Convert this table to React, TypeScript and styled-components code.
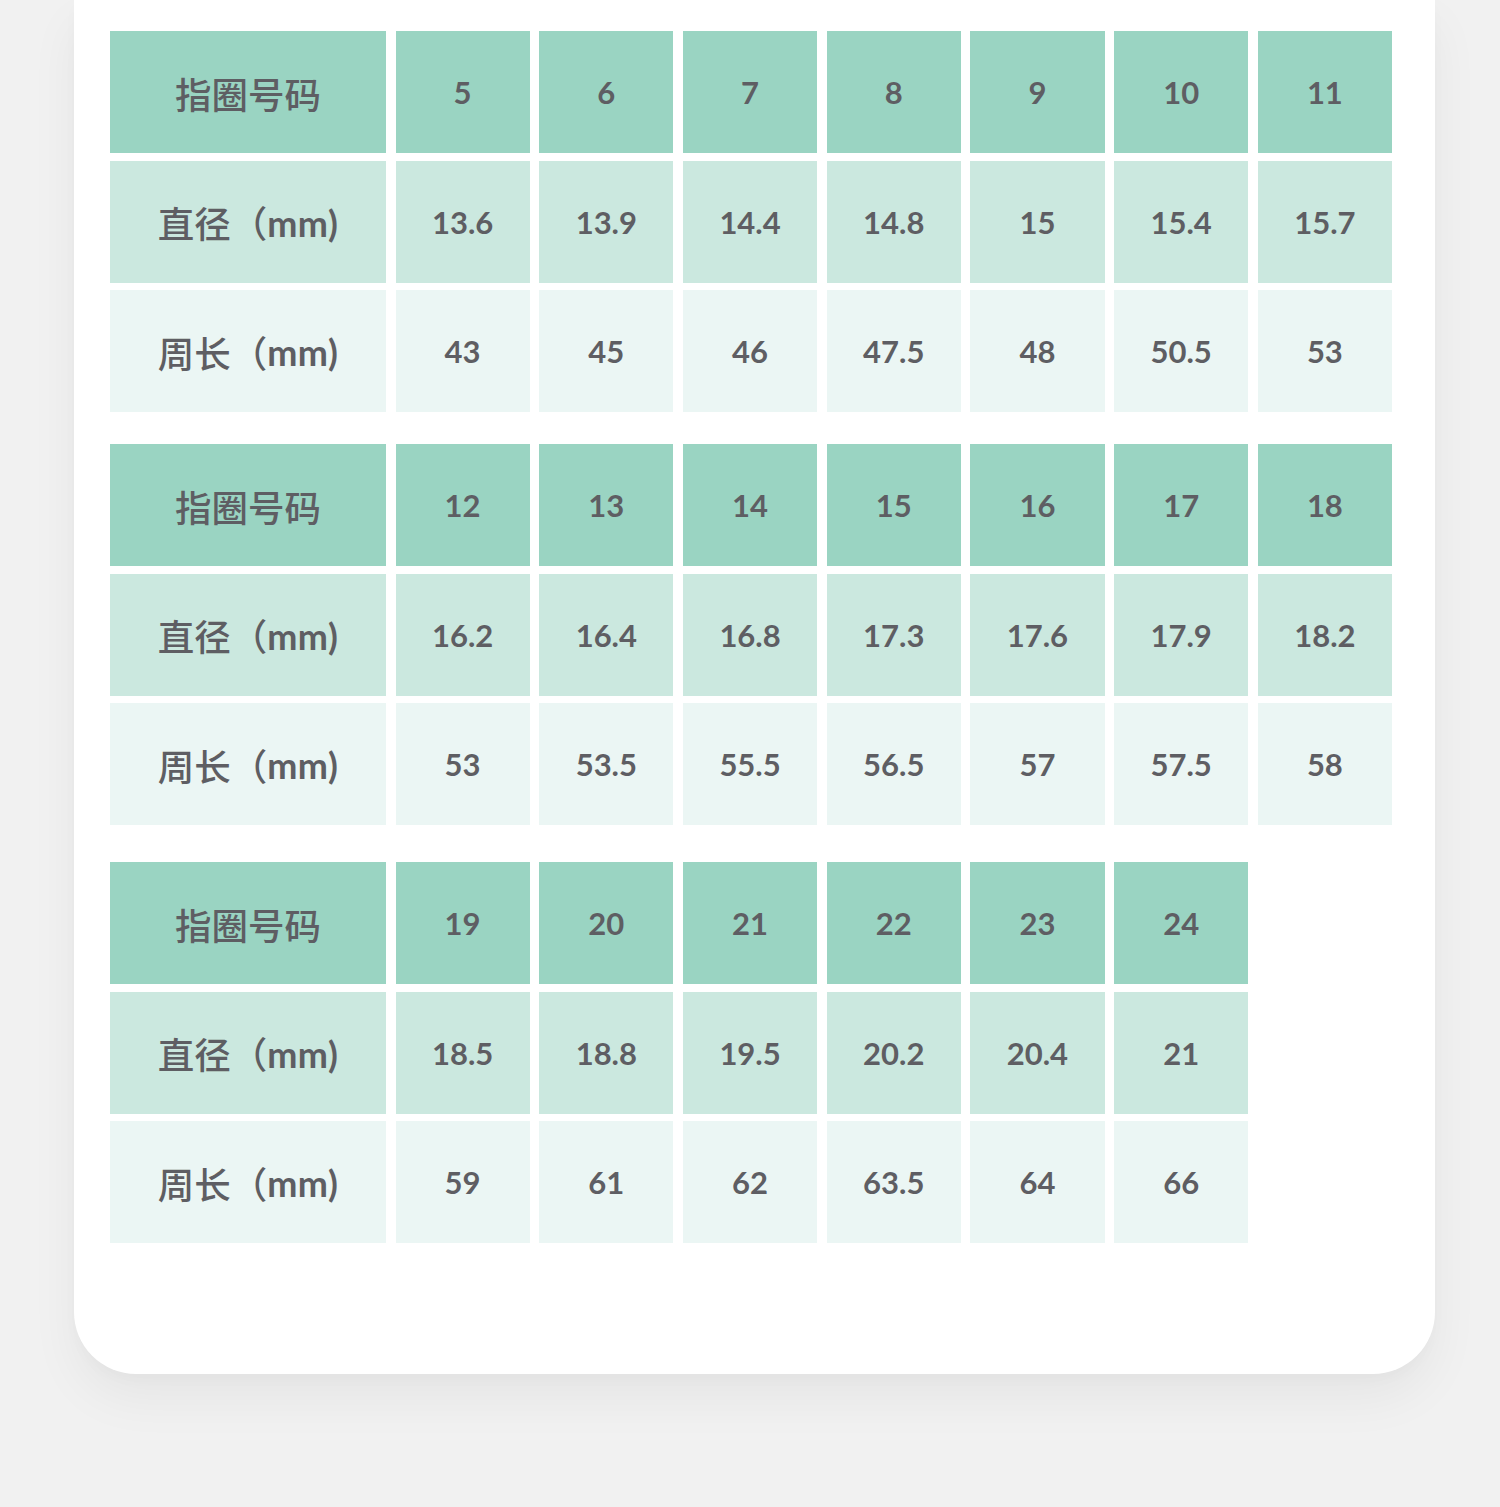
import React from "react";
import styled, { createGlobalStyle } from "styled-components";

const GlobalStyle = createGlobalStyle`
  html, body {
    margin: 0;
    padding: 0;
    background: #f1f1f1;
  }
  #root {
    min-height: 1507px;
  }
`;

const Page = styled.div`
  min-height: 1507px;
  box-sizing: border-box;
  background: #f1f1f1;
  padding: 0 65px 0 74px;
  font-family: "Lato", "Noto Sans CJK SC", sans-serif;
`;

const Card = styled.div`
  background: #ffffff;
  border-radius: 0 0 62px 62px;
  box-shadow: 0 24px 50px rgba(0, 0, 0, 0.05), 0 6px 14px rgba(0, 0, 0, 0.02);
  padding: 31px 43px 131px 36px;
  display: flex;
  flex-direction: column;
`;

const Table = styled.div<{ $spaceBefore?: number }>`
  display: flex;
  flex-direction: column;
  gap: 7.5px;
  margin-top: ${(p) => p.$spaceBefore ?? 0}px;
`;

const Row = styled.div`
  display: grid;
  grid-template-columns: 276px repeat(7, 1fr);
  column-gap: 9.5px;
  height: 122px;
`;

type Tone = "head" | "mid" | "light";

const tones: Record<Tone, string> = {
  head: "#9ad4c2",
  mid: "#cbe8df",
  light: "#ebf6f4",
};

const Cell = styled.div<{ $tone: Tone }>`
  background: ${(p) => tones[p.$tone]};
  display: flex;
  align-items: center;
  justify-content: center;
  color: #5e5e63;
  font-size: 31px;
  font-weight: 700;
`;

const LabelCell = styled(Cell)`
  font-family: "Noto Sans CJK SC", sans-serif;
  font-size: 36.5px;
  font-weight: 500;
  padding-top: 2px;
`;

const Paren = styled.span`
  font-family: "Lato", "Noto Sans CJK SC", sans-serif;
  font-weight: 700;
  font-size: 36px;
  letter-spacing: 0.5px;
`;

type Block = { sizes: string[]; dia: string[]; circ: string[]; space: number };

const blocks: Block[] = [
  {
    sizes: ["5", "6", "7", "8", "9", "10", "11"],
    dia: ["13.6", "13.9", "14.4", "14.8", "15", "15.4", "15.7"],
    circ: ["43", "45", "46", "47.5", "48", "50.5", "53"],
    space: 0,
  },
  {
    sizes: ["12", "13", "14", "15", "16", "17", "18"],
    dia: ["16.2", "16.4", "16.8", "17.3", "17.6", "17.9", "18.2"],
    circ: ["53", "53.5", "55.5", "56.5", "57", "57.5", "58"],
    space: 32,
  },
  {
    sizes: ["19", "20", "21", "22", "23", "24"],
    dia: ["18.5", "18.8", "19.5", "20.2", "20.4", "21"],
    circ: ["59", "61", "62", "63.5", "64", "66"],
    space: 37,
  },
];

const DataRow = ({
  tone,
  label,
  values,
}: {
  tone: Tone;
  label: React.ReactNode;
  values: string[];
}) => (
  <Row>
    <LabelCell $tone={tone}>{label}</LabelCell>
    {values.map((v, i) => (
      <Cell key={i} $tone={tone}>
        {v}
      </Cell>
    ))}
  </Row>
);

export default function App() {
  return (
    <>
      <GlobalStyle />
      <Page>
        <Card>
          {blocks.map((b, i) => (
            <Table key={i} $spaceBefore={b.space}>
              <DataRow tone="head" label="指圈号码" values={b.sizes} />
              <DataRow
                tone="mid"
                label={
                  <>
                    直径（<Paren>mm)</Paren>
                  </>
                }
                values={b.dia}
              />
              <DataRow
                tone="light"
                label={
                  <>
                    周长（<Paren>mm)</Paren>
                  </>
                }
                values={b.circ}
              />
            </Table>
          ))}
        </Card>
      </Page>
    </>
  );
}
